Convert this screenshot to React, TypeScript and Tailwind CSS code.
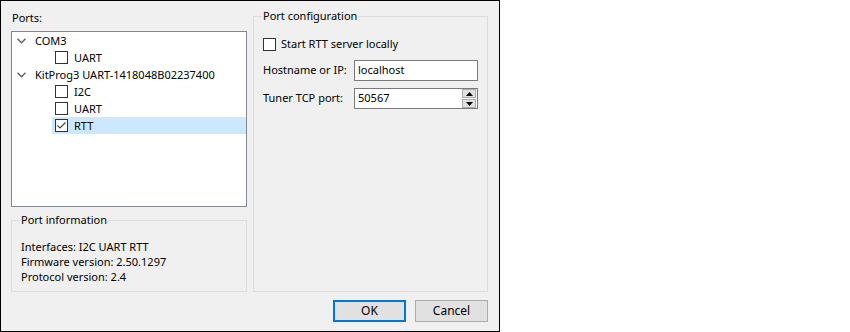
import React from 'react';

const Check: React.FC<{ checked?: boolean }> = ({ checked }) => (
  <span className="w-[13px] h-[13px] border border-[#333333] bg-white flex items-center justify-center shrink-0">
    {checked && (
      <svg width="11" height="11" viewBox="0 0 11 11">
        <path d="M1.5 5.5 L4 8 L9.5 2.5" fill="none" stroke="#404040" strokeWidth="1.1" />
      </svg>
    )}
  </span>
);

const Chevron = () => (
  <svg width="9" height="6" viewBox="0 0 9 6" className="ml-[5px] shrink-0">
    <path d="M0.5 0.8 L4.5 4.8 L8.5 0.8" fill="none" stroke="#606060" strokeWidth="1.4" />
  </svg>
);

const Parent: React.FC<{ label: string }> = ({ label }) => (
  <div className="h-[17px] flex items-center">
    <Chevron />
    <span className="ml-[9px] leading-[17px] whitespace-nowrap">{label}</span>
  </div>
);

const Child: React.FC<{ label: string; checked?: boolean; selected?: boolean }> = ({ label, checked, selected }) => (
  <div className={`h-[17px] ml-[40px] pl-[3px] flex items-center ${selected ? 'bg-[#cce8ff]' : ''}`}>
    <Check checked={checked} />
    <span className="ml-[6px] leading-[17px]">{label}</span>
  </div>
);

const GroupTitle: React.FC<{ children: React.ReactNode }> = ({ children }) => (
  <span className="absolute top-[-9px] left-[8px] px-[1px] bg-[#f0f0f0] leading-[16px] whitespace-nowrap">{children}</span>
);

export default function App() {
  return (
    <div className="min-h-screen bg-white font-['Noto_Sans',sans-serif] text-[11px] text-black">
      <div className="w-[500px] h-[332px] border border-black bg-[#f0f0f0] flex flex-col">
        <div className="flex gap-[6px] pl-[10px]">
          {/* left column */}
          <div className="w-[236px] flex flex-col">
            <div className="mt-[8px] h-[17px] leading-[17px] pl-[1px]">Ports:</div>
            <div className="mt-[5px] h-[176px] border border-[#828790] bg-white">
              <Parent label="COM3" />
              <Child label="UART" />
              <Parent label="KitProg3 UART-1418048B02237400" />
              <Child label="I2C" />
              <Child label="UART" />
              <Child label="RTT" checked selected />
            </div>
            <div className="relative mt-[13px] h-[72px] border border-[#dcdcdc] pl-[9px] pt-[18px] leading-[15px]">
              <GroupTitle>Port information</GroupTitle>
              <div>Interfaces: I2C UART RTT</div>
              <div>Firmware version: 2.50.1297</div>
              <div>Protocol version: 2.4</div>
            </div>
          </div>

          {/* right column */}
          <div className="w-[235px] mt-[15px]">
            <div className="relative h-[276px] border border-[#dcdcdc] pl-[9px] pt-[21px]">
              <GroupTitle>Port configuration</GroupTitle>
              <div className="flex items-center h-[13px]">
                <Check />
                <span className="ml-[5px] whitespace-nowrap">Start RTT server locally</span>
              </div>
              <div className="mt-[9px] flex items-center h-[21px]">
                <span className="w-[91px] whitespace-nowrap">Hostname or IP:</span>
                <div className="w-[124px] h-[21px] border border-[#7a7a7a] bg-white pl-[3px] flex items-center">localhost</div>
              </div>
              <div className="mt-[7px] flex items-center h-[21px]">
                <span className="w-[91px] whitespace-nowrap">Tuner TCP port:</span>
                <div className="w-[124px] h-[21px] border border-[#7a7a7a] bg-white pl-[3px] flex items-center justify-between">
                  <span>50567</span>
                  <div className="flex flex-col h-[19px] w-[14px] mr-[1px] gap-[1px]">
                    <div className="flex-1 bg-[#e1e1e1] border border-[#adadad] flex items-center justify-center">
                      <svg width="7" height="4" viewBox="0 0 7 4"><path d="M0 4 L3.5 0 L7 4 Z" fill="#000" /></svg>
                    </div>
                    <div className="flex-1 bg-[#e1e1e1] border border-[#adadad] flex items-center justify-center">
                      <svg width="7" height="4" viewBox="0 0 7 4"><path d="M0 0 L3.5 4 L7 0 Z" fill="#000" /></svg>
                    </div>
                  </div>
                </div>
              </div>
            </div>
          </div>
        </div>

        {/* buttons */}
        <div className="mt-[8px] flex justify-end gap-[9px] pr-[11px]">
          <button className="w-[73px] h-[22px] border-2 border-[#0078d7] bg-[#e1e1e1] flex items-center justify-center text-[12px]">OK</button>
          <button className="w-[73px] h-[22px] border border-[#adadad] bg-[#e1e1e1] flex items-center justify-center text-[12px]">Cancel</button>
        </div>
      </div>
    </div>
  );
}
